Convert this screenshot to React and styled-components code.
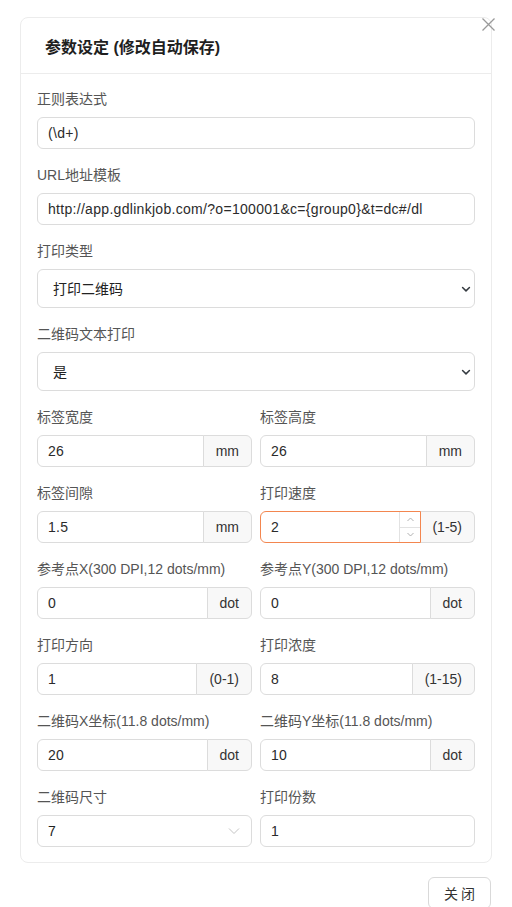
import React from "react";
import styled, { createGlobalStyle } from "styled-components";

const GlobalStyle = createGlobalStyle`
  html, body { margin: 0; padding: 0; background: #fff; }
  body {
    font-family: "Liberation Sans", "Noto Sans CJK SC", sans-serif;
    color: #333;
  }
  * { box-sizing: border-box; }
`;

const Dialog = styled.div`
  position: relative;
  width: 512px;
  padding: 17px 20px 0 20px;
`;

const CloseBtn = styled.button`
  position: absolute;
  top: 17px;
  right: 17px;
  width: 14px;
  height: 14px;
  padding: 0;
  border: 0;
  background: transparent;
  display: flex;
  align-items: center;
  justify-content: center;
  cursor: pointer;
`;

const Card = styled.div`
  border: 1px solid #ececec;
  border-radius: 8px;
  background: #fff;
`;

const CardHeader = styled.div`
  height: 56px;
  padding: 0 24px;
  display: flex;
  align-items: center;
  border-bottom: 1px solid #ececec;
  font-size: 16px;
  font-weight: 700;
  color: #1f1f1f;
`;

const CardBody = styled.div`
  padding: 15px 16px 15px 16px;
  display: flex;
  flex-direction: column;
  gap: 16px;
`;

const Grid = styled.div`
  display: grid;
  grid-template-columns: 1fr 1fr;
  column-gap: 8px;
  row-gap: 16px;
`;

const Field = styled.div`
  display: flex;
  flex-direction: column;
  gap: 8px;
  min-width: 0;
`;

const Label = styled.label`
  font-size: 14px;
  line-height: 20px;
  height: 20px;
  color: #555;
  white-space: nowrap;
`;

const TextInput = styled.input`
  height: 32px;
  width: 100%;
  min-width: 0;
  border: 1px solid ${(p) => (p.$focused ? "#f3864f" : "#dcdcdc")};
  border-radius: ${(p) => (p.$grouped ? "6px 0 0 6px" : "6px")};
  padding: 0 10px;
  font-family: inherit;
  font-size: 14px;
  letter-spacing: 0.3px;
  color: #2b2b2b;
  background: #fff;
  outline: none;
`;

const Group = styled.div`
  display: flex;
  height: 32px;
`;

const InputWrap = styled.div`
  position: relative;
  flex: 1;
  min-width: 0;
  display: flex;
`;

const Addon = styled.div`
  display: flex;
  align-items: center;
  padding: 0 12px;
  background: #f8f8f8;
  border: 1px solid #dcdcdc;
  border-left: ${(p) => (p.$noLeft ? "0" : "1px solid #dcdcdc")};
  border-radius: 0 6px 6px 0;
  margin-left: -1px;
  font-size: 14px;
  color: #333;
  white-space: nowrap;
`;

const Spinner = styled.div`
  position: absolute;
  top: 1px;
  right: 1px;
  bottom: 1px;
  width: 21px;
  display: flex;
  flex-direction: column;
  border-left: 1px solid #e2e2e2;
`;

const SpinCell = styled.div`
  flex: 1;
  display: flex;
  align-items: center;
  justify-content: center;
  border-top: ${(p) => (p.$bottom ? "1px solid #e2e2e2" : "0")};
`;

const SelectWrap = styled.div`
  position: relative;
  display: flex;
`;

const Select = styled.select`
  appearance: none;
  -webkit-appearance: none;
  width: 100%;
  height: ${(p) => (p.$compact ? "32px" : "39px")};
  border: 1px solid #dcdcdc;
  border-radius: 6px;
  padding: ${(p) => (p.$compact ? "0 30px 0 10px" : "0 36px 0 15px")};
  font-family: inherit;
  font-size: 14px;
  color: #222;
  background: #fff;
  outline: none;
`;

const Chevron = styled.span`
  position: absolute;
  right: ${(p) => (p.$compact ? "12px" : "4px")};
  top: 0;
  bottom: 0;
  display: flex;
  align-items: center;
  pointer-events: none;
`;

const Footer = styled.div`
  display: flex;
  justify-content: flex-end;
  padding: 14px 1px 0 0;
`;

const Button = styled.button`
  width: 63px;
  height: 32px;
  border: 1px solid #d9d9d9;
  border-radius: 6px;
  background: #fff;
  font-family: inherit;
  font-size: 14px;
  color: #333;
  letter-spacing: 3px;
  padding: 0 0 0 3px;
`;

const BoldChevron = () => (
  <svg width="10" height="10" viewBox="0 0 16 16">
    <path d="M2.5 5.5l5.5 5.5 5.5-5.5" fill="none" stroke="#343a40" strokeWidth="2.4" strokeLinecap="round" strokeLinejoin="round" />
  </svg>
);

const ThinChevron = () => (
  <svg width="12" height="8" viewBox="0 0 12 8">
    <path d="M1 1.5l5 5 5-5" fill="none" stroke="#c4c4c4" strokeWidth="1" />
  </svg>
);

const Up = () => (
  <svg width="7" height="5" viewBox="0 0 7 5">
    <path d="M0.5 4l3-3 3 3" fill="none" stroke="#a8a8a8" strokeWidth="0.9" />
  </svg>
);
const Down = () => (
  <svg width="7" height="5" viewBox="0 0 7 5">
    <path d="M0.5 1l3 3 3-3" fill="none" stroke="#a8a8a8" strokeWidth="0.9" />
  </svg>
);

const UnitField = ({ label, value, unit, focused, spinner }) => (
  <Field>
    <Label>{label}</Label>
    <Group>
      <InputWrap>
        <TextInput $grouped $focused={focused} defaultValue={value} style={focused ? { position: "relative", zIndex: 1 } : undefined} />
        {spinner && (
          <Spinner style={{ zIndex: 2 }}>
            <SpinCell><Up /></SpinCell>
            <SpinCell $bottom><Down /></SpinCell>
          </Spinner>
        )}
      </InputWrap>
      <Addon $noLeft={focused}>{unit}</Addon>
    </Group>
  </Field>
);

export default function App() {
  return (
    <>
      <GlobalStyle />
      <Dialog>
        <CloseBtn aria-label="close">
          <svg width="13" height="13" viewBox="0 0 13 13">
            <path d="M0.5 0.5l12 12M12.5 0.5l-12 12" stroke="#9a9a9a" strokeWidth="1.3" />
          </svg>
        </CloseBtn>
        <Card>
          <CardHeader>参数设定 (修改自动保存)</CardHeader>
          <CardBody>
            <Field>
              <Label>正则表达式</Label>
              <TextInput defaultValue="(\d+)" />
            </Field>
            <Field>
              <Label>URL地址模板</Label>
              <TextInput defaultValue="http://app.gdlinkjob.com/?o=100001&c={group0}&t=dc#/dl" />
            </Field>
            <Field>
              <Label>打印类型</Label>
              <SelectWrap>
                <Select defaultValue="qr">
                  <option value="qr">打印二维码</option>
                </Select>
                <Chevron><BoldChevron /></Chevron>
              </SelectWrap>
            </Field>
            <Field>
              <Label>二维码文本打印</Label>
              <SelectWrap>
                <Select defaultValue="yes">
                  <option value="yes">是</option>
                </Select>
                <Chevron><BoldChevron /></Chevron>
              </SelectWrap>
            </Field>
            <Grid>
              <UnitField label="标签宽度" value="26" unit="mm" />
              <UnitField label="标签高度" value="26" unit="mm" />
              <UnitField label="标签间隙" value="1.5" unit="mm" />
              <UnitField label="打印速度" value="2" unit="(1-5)" focused spinner />
              <UnitField label="参考点X(300 DPI,12 dots/mm)" value="0" unit="dot" />
              <UnitField label="参考点Y(300 DPI,12 dots/mm)" value="0" unit="dot" />
              <UnitField label="打印方向" value="1" unit="(0-1)" />
              <UnitField label="打印浓度" value="8" unit="(1-15)" />
              <UnitField label="二维码X坐标(11.8 dots/mm)" value="20" unit="dot" />
              <UnitField label="二维码Y坐标(11.8 dots/mm)" value="10" unit="dot" />
              <Field>
                <Label>二维码尺寸</Label>
                <SelectWrap>
                  <Select $compact defaultValue="7">
                    <option value="7">7</option>
                  </Select>
                  <Chevron $compact><ThinChevron /></Chevron>
                </SelectWrap>
              </Field>
              <Field>
                <Label>打印份数</Label>
                <TextInput defaultValue="1" />
              </Field>
            </Grid>
          </CardBody>
        </Card>
        <Footer>
          <Button>关闭</Button>
        </Footer>
      </Dialog>
    </>
  );
}
